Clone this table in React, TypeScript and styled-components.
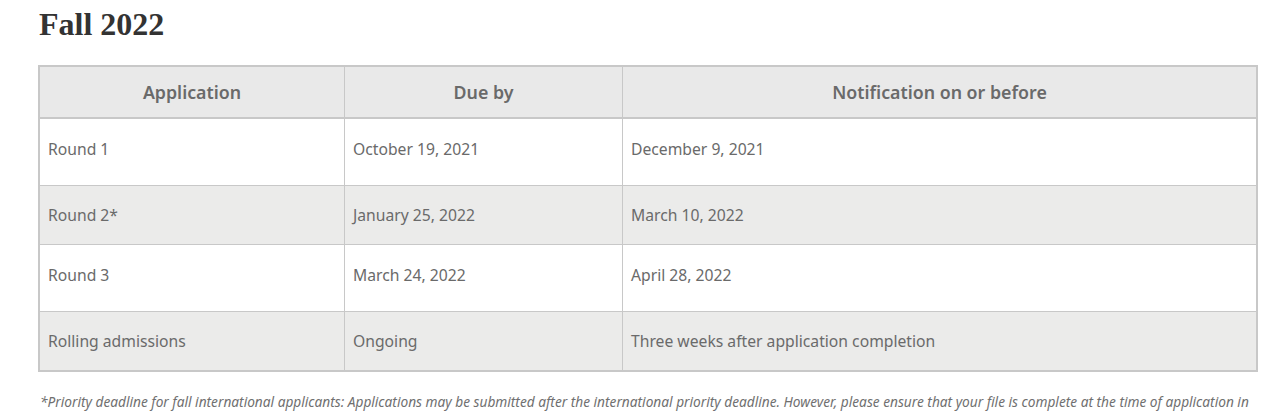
import React from "react";
import styled, { createGlobalStyle } from "styled-components";

const Global = createGlobalStyle`
  html, body { margin: 0; padding: 0; background: #fff; }
  body { font-family: "Noto Sans", sans-serif; }
`;

const Page = styled.div`
  padding: 0 26px 0 38px;
  overflow: hidden;
  height: 417px;
`;

const Heading = styled.h2`
  margin: 0;
  padding: 6px 0 0 1px;
  height: 65px;
  box-sizing: border-box;
  font-family: "Liberation Serif", "Times New Roman", serif;
  font-weight: bold;
  font-size: 32px;
  line-height: 36px;
  color: #333;
`;

const Table = styled.table`
  width: 1220px;
  border-collapse: collapse;
  border: 2px solid #c8c8c8;
  table-layout: fixed;
  font-family: "Noto Sans", sans-serif;
  color: #6a6a6a;
`;

const HeadCell = styled.th<{ $w?: number }>`
  ${(p) => (p.$w ? `width: ${p.$w}px;` : "")}
  height: 50px;
  padding: 0;
  background: #e9e9e9;
  border: 1px solid #c8c8c8;
  border-bottom: 2px solid #c8c8c8;
  font-size: 17.8px;
  font-weight: 600;
  text-align: center;
  color: #6a6a6a;
`;

const Row = styled.tr<{ $shade: boolean }>`
  background: ${(p) => (p.$shade ? "#ebebea" : "#fff")};
`;

const Cell = styled.td<{ $tall: boolean }>`
  height: ${(p) => (p.$tall ? 59 : 58)}px;
  padding: ${(p) => (p.$tall ? "0 8px 7px" : "0 8px")};
  border: 1px solid #c8c8c8;
  font-size: 15.7px;
  vertical-align: middle;
`;

const Note = styled.p`
  margin: 20px 0 0 2px;
  font-family: "Noto Sans", sans-serif;
  font-style: italic;
  font-size: 13.7px;
  color: #707070;
  white-space: nowrap;
`;

const rows = [
  ["Round 1", "October 19, 2021", "December 9, 2021"],
  ["Round 2*", "January 25, 2022", "March 10, 2022"],
  ["Round 3", "March 24, 2022", "April 28, 2022"],
  ["Rolling admissions", "Ongoing", "Three weeks after application completion"],
];

export default function App() {
  return (
    <Page>
      <Global />
      <Heading>Fall 2022</Heading>
      <Table>
        <thead>
          <tr>
            <HeadCell $w={304}>Application</HeadCell>
            <HeadCell $w={277}>Due by</HeadCell>
            <HeadCell>Notification on or before</HeadCell>
          </tr>
        </thead>
        <tbody>
          {rows.map((r, i) => (
            <Row key={i} $shade={i % 2 === 1}>
              {r.map((c, j) => (
                <Cell key={j} $tall={i % 2 === 0}>
                  {c}
                </Cell>
              ))}
            </Row>
          ))}
        </tbody>
      </Table>
      <Note>
        *Priority deadline for fall international applicants: Applications may be submitted after the international priority deadline. However, please ensure that your file is complete at the time of application in
      </Note>
    </Page>
  );
}
